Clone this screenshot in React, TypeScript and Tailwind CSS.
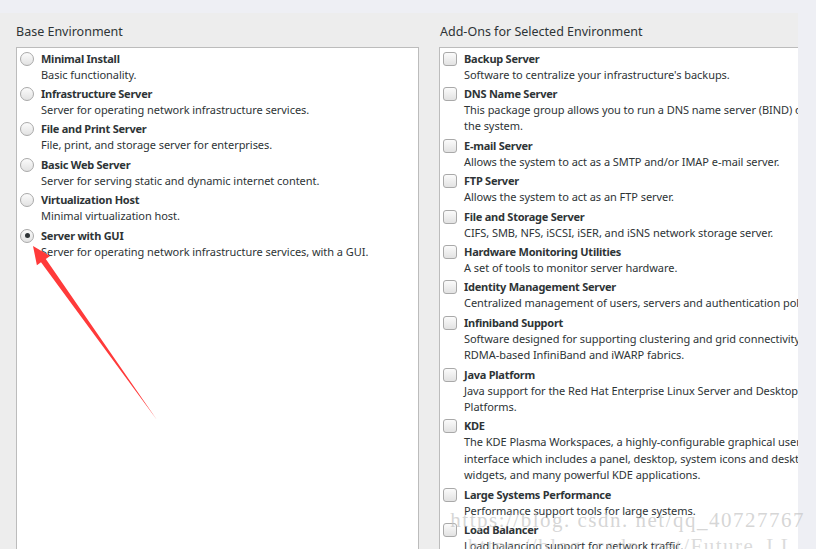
import React from "react";

const baseEnvs = [
  { name: "Minimal Install", desc: ["Basic functionality."] },
  { name: "Infrastructure Server", desc: ["Server for operating network infrastructure services."] },
  { name: "File and Print Server", desc: ["File, print, and storage server for enterprises."] },
  { name: "Basic Web Server", desc: ["Server for serving static and dynamic internet content."] },
  { name: "Virtualization Host", desc: ["Minimal virtualization host."] },
  { name: "Server with GUI", desc: ["Server for operating network infrastructure services, with a GUI."], selected: true },
];

const addOns = [
  { name: "Backup Server", desc: ["Software to centralize your infrastructure's backups."] },
  { name: "DNS Name Server", desc: ["This package group allows you to run a DNS name server (BIND) on", "the system."] },
  { name: "E-mail Server", desc: ["Allows the system to act as a SMTP and/or IMAP e-mail server."] },
  { name: "FTP Server", desc: ["Allows the system to act as an FTP server."] },
  { name: "File and Storage Server", desc: ["CIFS, SMB, NFS, iSCSI, iSER, and iSNS network storage server."] },
  { name: "Hardware Monitoring Utilities", desc: ["A set of tools to monitor server hardware."] },
  { name: "Identity Management Server", desc: ["Centralized management of users, servers and authentication policies."] },
  { name: "Infiniband Support", desc: ["Software designed for supporting clustering and grid connectivity using", "RDMA-based InfiniBand and iWARP fabrics."] },
  { name: "Java Platform", desc: ["Java support for the Red Hat Enterprise Linux Server and Desktop", "Platforms."] },
  { name: "KDE", desc: ["The KDE Plasma Workspaces, a highly-configurable graphical user", "interface which includes a panel, desktop, system icons and desktop", "widgets, and many powerful KDE applications."] },
  { name: "Large Systems Performance", desc: ["Performance support tools for large systems."] },
  { name: "Load Balancer", desc: ["Load balancing support for network traffic."] },
];

const Radio = ({ checked }: { checked?: boolean }) => (
  <span className="mt-[1px] flex h-[14px] w-[14px] shrink-0 items-center justify-center rounded-full border border-[#a9a9a9] bg-gradient-to-b from-[#fbfbfb] to-[#e2e2e2]">
    {checked && <span className="h-[5px] w-[5px] rounded-full bg-[#2e3436]" />}
  </span>
);

const Check = () => (
  <span className="mt-[1px] h-[14px] w-[14px] shrink-0 rounded-[3px] border border-[#a9a9a9] bg-gradient-to-b from-[#fbfbfb] to-[#e2e2e2]" />
);

type Item = { name: string; desc: string[]; selected?: boolean };

const Row = ({ item, kind }: { item: Item; kind: "radio" | "check" }) => (
  <div className="flex gap-[7px] pb-[3px]">
    {kind === "radio" ? <Radio checked={item.selected} /> : <Check />}
    <div className="whitespace-nowrap">
      <div className="text-[11px] font-bold leading-[16px] tracking-[-0.25px]">{item.name}</div>
      {item.desc.map((d) => (
        <div key={d} className="text-[11px] leading-[16.4px] tracking-[-0.05px]">
          {d}
        </div>
      ))}
    </div>
  </div>
);

export default function App() {
  return (
    <div
      className="relative flex h-[549px] w-[816px] flex-col overflow-hidden bg-[#eeeff4] text-[#2e3436]"
      style={{ fontFamily: '"Noto Sans", "DejaVu Sans", sans-serif' }}
    >
      <div className="h-[13px] shrink-0" />
      <div className="flex w-[798px] flex-1 gap-[20px] overflow-hidden bg-[#ededed] pl-[16px]">
        {/* Base Environment */}
        <div className="flex w-[403px] shrink-0 flex-col">
          <div className="h-[34px] shrink-0 pt-[11px] text-[12.5px] leading-[16px]">Base Environment</div>
          <div className="flex-1 border border-b-0 border-[#bcbcbc] bg-white pl-[3px] pt-[2.5px]">
            {baseEnvs.map((e) => (
              <Row key={e.name} item={e} kind="radio" />
            ))}
          </div>
        </div>

        {/* Add-ons */}
        <div className="flex w-[420px] shrink-0 flex-col">
          <div className="h-[34px] shrink-0 pl-[1px] pt-[11px] text-[12.5px] leading-[16px]">
            Add-Ons for Selected Environment
          </div>
          <div className="flex-1 overflow-hidden border border-b-0 border-r-0 border-[#bcbcbc] bg-white pl-[3px] pt-[2.5px]">
            {addOns.map((e) => (
              <Row key={e.name} item={e} kind="check" />
            ))}
          </div>
        </div>
      </div>

      {/* red arrow annotation */}
      <svg className="pointer-events-none absolute left-0 top-0" width="816" height="549">
        <polygon
          points="33,246 50,256 45.8,258.9 157,420 41,262.3 36.9,265.2"
          fill="#ff3a3a"
        />
      </svg>

      {/* watermark */}
      <div
        className="pointer-events-none absolute right-[11px] top-[507px] flex flex-col items-end whitespace-nowrap text-[21px] leading-[26px] text-[#c4c4c4]/70"
        style={{ fontFamily: '"Liberation Serif", serif' }}
      >
        <span className="tracking-[1.5px]">https://blog. csdn. net/qq_40727767</span>
        <span className="mr-[10px] tracking-[1.5px] text-[#c4c4c4]/60">https://blog. csdn. net/Future_LL</span>
      </div>
    </div>
  );
}
